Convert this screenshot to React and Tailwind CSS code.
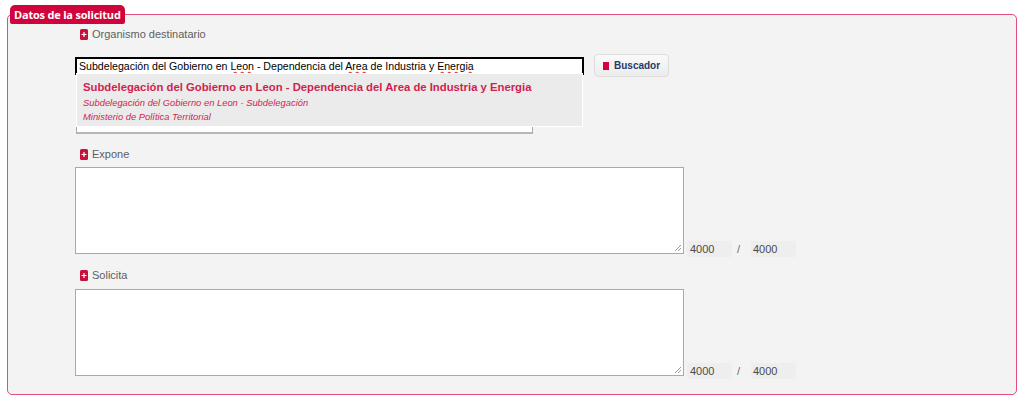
function ReqIcon() {
  return (
    <svg width="8" height="11" viewBox="0 0 8 11" className="shrink-0">
      <rect x="0" y="0" width="8" height="11" rx="1.5" fill="#c8103c" />
      <path d="M4 3v5M1.5 5.5h5" stroke="#fff" strokeWidth="1.2" />
    </svg>
  )
}

function Label({ children }) {
  return (
    <div className="flex items-center gap-[4px] pl-[5px] h-[14px] text-[11px] text-[#606060]">
      <ReqIcon />
      <span>{children}</span>
    </div>
  )
}

function Counter() {
  return (
    <div className="flex items-end text-[11px] text-[#4a4a4a] -mb-[3px]">
      <div className="w-[45px] h-[16px] bg-[#eeeeee] pl-[3px] leading-[16px]">4000</div>
      <div className="w-[19px] pl-[5px] leading-[16px] text-[#5a6a8a]">/</div>
      <div className="w-[45px] h-[16px] bg-[#eeeeee] pl-[2px] leading-[16px]">4000</div>
    </div>
  )
}

function TextBox() {
  return (
    <div className="flex items-end gap-[3px]">
      <div className="relative w-[609px] h-[87px] bg-white border border-[#a9a9a9]">
        <svg width="8" height="8" viewBox="0 0 8 8" className="absolute right-[1px] bottom-[1px]">
          <path d="M7 1L1 7M7 4L4 7" stroke="#999" strokeWidth="1" />
        </svg>
      </div>
      <Counter />
    </div>
  )
}

export default function App() {
  return (
    <div className="w-[1024px] h-[399px] bg-white px-[7px] pt-[5px]" style={{ fontFamily: "'Liberation Sans', Arial, sans-serif" }}>
      <fieldset className="border border-[#e0507a] rounded-[5px] bg-[#f3f3f3] h-[390px] p-0">
        <legend className="ml-[2px] px-[4px] h-[19px] leading-[19px] rounded-t-[5px] rounded-b-[2px] bg-[#d0043c] text-white text-[11px] font-bold tracking-[-0.2px]" style={{ fontFamily: "'Open Sans', sans-serif" }}>
          Datos de la solicitud
        </legend>

        <div className="pl-[67px] pr-[20px]">
          <div className="pt-[3px]">
            <Label>Organismo destinatario</Label>
          </div>

          <div className="relative mt-[13px]">
            <div className="flex items-center gap-[10px]">
              <div className="w-[509px] h-[18px] bg-white border-2 border-black px-[2px] text-[10.6px] leading-[14px] text-black whitespace-nowrap overflow-hidden">
                Subdelegación del Gobierno en <span className="underline decoration-wavy decoration-[#e03030]">Leon</span> - Dependencia del <span className="underline decoration-wavy decoration-[#e03030]">Area</span> de Industria y <span className="underline decoration-wavy decoration-[#e03030]">Energia</span>
              </div>
              <button className="flex items-center gap-[5px] h-[23px] px-[8px] rounded-[4px] border border-[#dddddd] bg-gradient-to-b from-[#fafafa] to-[#ececec] text-[10px] font-bold text-[#1f3a6a]">
                <span className="w-[6px] h-[8px] bg-[#d6003f] inline-block" />
                Buscador
              </button>
            </div>
            <div className="ml-[1px] mt-[1px] w-[457px] h-[56px] bg-white border border-[#aaa] border-b-2 border-b-[#b5b5b5]" />
            <div className="absolute left-[1px] top-[19px] w-[507px] h-[54px] bg-[#ebebeb] border border-white pl-[6px] pt-[5px] text-[#d01f4f]">
              <div className="text-[11.3px] font-bold leading-[16px] whitespace-nowrap">Subdelegación del Gobierno en Leon - Dependencia del Area de Industria y Energia</div>
              <div className="text-[9.4px] italic leading-[14px] mt-[1px]">Subdelegación del Gobierno en Leon - Subdelegación</div>
              <div className="text-[9.4px] italic leading-[14px]">Ministerio de Política Territorial</div>
            </div>
          </div>

          <div className="mt-[13px]">
            <Label>Expone</Label>
          </div>
          <div className="mt-[6px]">
            <TextBox />
          </div>

          <div className="mt-[14px]">
            <Label>Solicita</Label>
          </div>
          <div className="mt-[7px]">
            <TextBox />
          </div>
        </div>
      </fieldset>
    </div>
  )
}
